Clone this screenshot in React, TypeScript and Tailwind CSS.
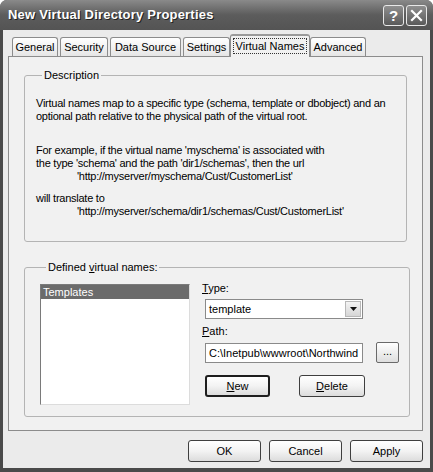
import React from 'react';

const font = "font-['Tahoma','Liberation_Sans',sans-serif]";

function Tab({ label, w, active }: { label: string; w: string; active?: boolean }) {
  if (active) {
    return (
      <div className={`${w} h-[23px] -mx-[2px] relative z-10 flex items-start justify-center pt-[2px] bg-[#f1f1f1] border border-b-0 border-[#8c8c8c] rounded-t-[3px] border-t-[2px] border-t-[#9a9a9a]`}>
        <span className="border border-dotted border-[#333] px-[2px] leading-[14px]">{label}</span>
      </div>
    );
  }
  return (
    <div className={`${w} h-[20px] mt-[2px] flex items-center justify-center bg-gradient-to-b from-white to-[#e4e4e4] border border-b-0 border-[#8c8c8c] rounded-t-[3px]`}>
      {label}
    </div>
  );
}

function Btn({ children, def, w = 'w-[73px]' }: { children: React.ReactNode; def?: boolean; w?: string }) {
  return (
    <div
      className={`${w} h-[22px] flex items-center justify-center rounded-[3px] bg-gradient-to-b from-white via-[#f3f3f3] to-[#dcdcdc] ${
        def ? 'border-2 border-[#1e1e1e]' : 'border border-[#3f3f3f]'
      }`}
    >
      {children}
    </div>
  );
}

export default function App() {
  return (
    <div className={`w-[433px] h-[472px] bg-[#4a4a4a] rounded-t-[7px] flex flex-col text-[11px] text-black ${font}`}>
      {/* Title bar */}
      <div className="h-[30px] shrink-0 flex items-center justify-between pl-[8px] pr-[6px] rounded-t-[7px] bg-gradient-to-b from-[#8a8a8a] via-[#5c5c5c] to-[#545454]">
        <span className="text-white font-bold text-[13px] tracking-[0.2px] [text-shadow:1px_1px_0_#222]">New Virtual Directory Properties</span>
        <div className="flex gap-[2px] mt-[1px]">
          <div className="w-[21px] h-[21px] rounded-[3px] border border-[#e8e8e8] bg-gradient-to-b from-[#8f8f8f] to-[#5a5a5a] flex items-center justify-center text-white font-bold text-[15px] leading-none">?</div>
          <div className="w-[21px] h-[21px] rounded-[3px] border border-[#e8e8e8] bg-gradient-to-b from-[#8f8f8f] to-[#5a5a5a] flex items-center justify-center">
            <svg width="13" height="13" viewBox="0 0 13 13">
              <path d="M2 2 L11 11 M11 2 L2 11" stroke="#fff" strokeWidth="2.2" strokeLinecap="square" />
            </svg>
          </div>
        </div>
      </div>

      {/* Body */}
      <div className="flex-1 mx-[3px] mb-[4px] bg-[#ebebeb] flex flex-col">
        {/* Tabs */}
        <div className="flex items-end pl-[9px] pt-[4px] gap-[2px]">
          <Tab label="General" w="w-[46px]" />
          <Tab label="Security" w="w-[48px]" />
          <Tab label="Data Source" w="w-[71px]" />
          <Tab label="Settings" w="w-[47px]" />
          <Tab label="Virtual Names" w="w-[80px]" active />
          <Tab label="Advanced" w="w-[56px]" />
        </div>

        {/* Panel */}
        <div className="ml-[5px] w-[415px] h-[375px] -mt-[1px] bg-[#f1f1f1] border border-[#8c8c8c] px-[15px] pt-[12px]">
          <fieldset className="h-[173px] border border-[#b4b4b4] rounded-[3px] px-[11px]">
            <legend className="px-[2px] ml-[6px] leading-[13px]">Description</legend>
            <div className="leading-[13px] mt-[15px] whitespace-nowrap tracking-[-0.25px]">
              <p>Virtual names map to a specific type (schema, template or dbobject) and an</p>
              <p>optional path relative to the physical path of the virtual root.</p>
              <p className="mt-[21px]">For example, if the virtual name 'myschema' is associated with</p>
              <p>the type 'schema' and the path 'dir1/schemas', then the url</p>
              <p className="pl-[41px]">'http://myserver/myschema/Cust/CustomerList'</p>
              <p className="mt-[9px]">will translate to</p>
              <p className="pl-[41px]">'http://myserver/schema/dir1/schemas/Cust/CustomerList'</p>
            </div>
          </fieldset>

          <fieldset className="mt-[19px] h-[156px] border border-[#b4b4b4] rounded-[3px] pl-[15px] pr-[10px] flex">
            <legend className="px-[2px] ml-[6px] leading-[13px]">
              Defined <span className="underline">v</span>irtual names:
            </legend>
            <div className="flex gap-[12px] mt-[10px]">
              <div className="w-[150px] h-[121px] bg-white border border-[#7a7a7a] border-r-[#dcdcdc] border-b-[#dcdcdc]">
                <div className="h-[14px] bg-[#6b6b6b] text-white pl-[2px] leading-[14px]">Templates</div>
              </div>
              <div className="flex flex-col">
                <div className="leading-[13px] -mt-[2px]">
                  <span className="underline">T</span>ype:
                </div>
                <div className="mt-[4px] ml-[3px] w-[158px] h-[20px] bg-white border border-[#8a8a8a] flex items-center justify-between pl-[3px] pr-[1px]">
                  <span>template</span>
                  <div className="w-[16px] h-[16px] bg-gradient-to-b from-[#f4f4f4] to-[#d6d6d6] border border-[#b8b8b8] flex items-center justify-center">
                    <svg width="7" height="4" viewBox="0 0 7 4">
                      <path d="M0 0 H7 L3.5 4 Z" fill="#111" />
                    </svg>
                  </div>
                </div>
                <div className="mt-[6px] leading-[13px]">
                  <span className="underline">P</span>ath:
                </div>
                <div className="flex items-center mt-[4px] ml-[3px]">
                  <div className="w-[158px] h-[20px] bg-white border border-[#8a8a8a] pl-[3px] leading-[18px] overflow-hidden whitespace-nowrap">
                    C:\Inetpub\wwwroot\Northwind
                  </div>
                  <div className="ml-[13px] w-[23px] h-[21px] rounded-[2px] border border-[#6a6a6a] bg-gradient-to-b from-white to-[#dedede] flex items-center justify-center leading-none pb-[2px]">...</div>
                </div>
                <div className="flex mt-[12px] ml-[3px] gap-[29px]">
                  <Btn def w="w-[65px]">
                    <span><span className="underline">N</span>ew</span>
                  </Btn>
                  <Btn w="w-[66px]">
                    <span><span className="underline">D</span>elete</span>
                  </Btn>
                </div>
              </div>
            </div>
          </fieldset>
        </div>

        {/* Bottom buttons */}
        <div className="flex justify-end gap-[8px] pr-[7px] mt-[9px]">
          <Btn>OK</Btn>
          <Btn>Cancel</Btn>
          <Btn>Apply</Btn>
        </div>
      </div>
    </div>
  );
}
